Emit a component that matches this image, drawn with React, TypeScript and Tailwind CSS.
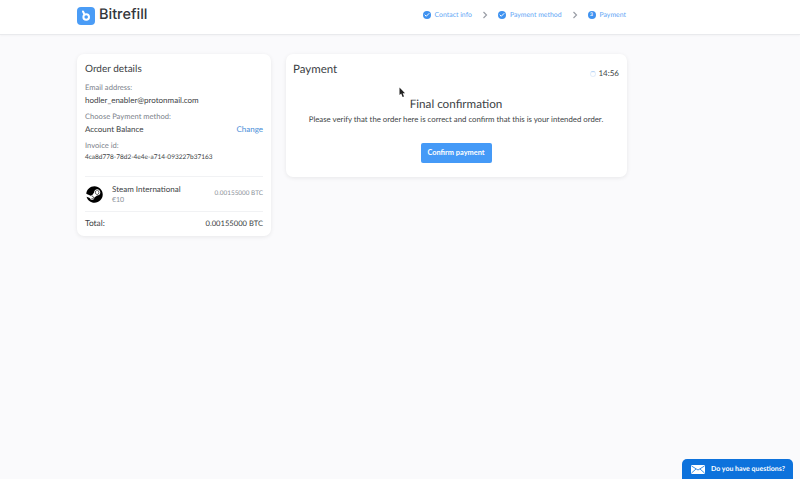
import { Check } from "lucide-react";
import { FaSteam } from "react-icons/fa";

const STEPS = [
  { label: "Contact info", done: true },
  { label: "Payment method", done: true },
  { label: "Payment", done: false },
];

export default function App() {
  return (
    <div className="relative h-[479px] w-[800px] overflow-hidden bg-[#fafafc] font-['Lato',sans-serif] text-[#3c3f45] [text-rendering:geometricPrecision]">
      <header className="flex h-[35px] items-center border-b border-[#e9eaed] bg-white pb-[3px] pl-[77px] pr-[174px] shadow-[0_1px_2px_rgba(0,0,0,0.03)]">
        <div className="flex items-center gap-[4px]">
          <div className="flex h-[18px] w-[18px] items-center justify-center rounded-[4px] bg-[#4a9cf6]">
            <svg width="12" height="12" viewBox="0 0 12 12" fill="none" stroke="#fff" strokeWidth="2" strokeLinecap="round">
              <path d="M3 1.5 4 3.5" />
              <circle cx="6.2" cy="7" r="2.8" />
            </svg>
          </div>
          <span className="font-['Inter',sans-serif] text-[14.5px] font-medium leading-none text-[#33363b]">Bitrefill</span>
        </div>
        <nav className="ml-auto flex items-center text-[6.9px] text-[#62a6f5]">
          {STEPS.map((step, i) => (
            <div key={step.label} className="flex items-center">
              <span className="flex h-[8px] w-[8px] items-center justify-center rounded-full bg-[#3f92f0] text-[5px] font-bold text-white">
                {step.done ? <Check size={6} strokeWidth={4} /> : "3"}
              </span>
              <span className="ml-[4px]">{step.label}</span>
              {i < STEPS.length - 1 && (
                <svg className="mx-[10px]" width="6" height="8" viewBox="0 0 6 8" fill="none" stroke="#9a9ea6" strokeWidth="1.2">
                  <path d="M1.5 1 4.5 4 1.5 7" />
                </svg>
              )}
            </div>
          ))}
        </nav>
      </header>

      <main className="flex items-start gap-[15px] pl-[77px] pt-[19px]">
        <section className="h-[182px] w-[194px] rounded-[7px] bg-white px-[8px] shadow-[0_1px_4px_rgba(0,0,0,0.08)]">
          <h2 className="pt-[8px] text-[10px] leading-[14px]">Order details</h2>
          <p className="mt-[6px] text-[7.6px] leading-[11px] text-[#7d828b]">Email address:</p>
          <p className="mt-[1px] text-[8px] leading-[12px]">hodler_enabler@protonmail.com</p>
          <p className="mt-[5px] text-[7.6px] leading-[11px] text-[#7d828b]">Choose Payment method:</p>
          <div className="mt-[1px] flex justify-between text-[8px] leading-[12px]">
            <span>Account Balance</span>
            <span className="text-[#4a8ed8]">Change</span>
          </div>
          <p className="mt-[5px] text-[7.6px] leading-[11px] text-[#7d828b]">Invoice id:</p>
          <p className="mt-[1px] text-[6.5px] leading-[11px]">4ca8d778-78d2-4e4e-a714-093227b37163</p>

          <div className="mt-[13px] flex h-[36px] items-center border-y border-[#f1f2f4]">
            <FaSteam className="ml-[1px] text-black" size={17} />
            <div className="ml-[9px]">
              <p className="text-[8px] leading-[11px]">Steam International</p>
              <p className="text-[7px] leading-[10px] text-[#8d929a]">€10</p>
            </div>
            <span className="ml-auto text-[6.4px] text-[#8d929a]">0.00155000 BTC</span>
          </div>
          <div className="mt-[5px] flex items-center justify-between text-[8.4px] leading-[12px]">
            <span>Total:</span>
            <span className="text-[7.6px]">0.00155000 BTC</span>
          </div>
        </section>

        <section className="h-[123px] w-[341px] rounded-[7px] bg-white pl-[7px] pr-[8px] shadow-[0_1px_4px_rgba(0,0,0,0.08)]">
          <div className="flex items-start justify-between">
            <h2 className="pt-[8px] text-[11.5px] leading-[16px]">Payment</h2>
            <div className="flex items-center pt-[14px] text-[8px] leading-[11px]">
              <span className="mr-[2px] h-[6px] w-[6px] rounded-full border border-[#e4eefb] border-t-[#b5d3f6]" />
              14:56
            </div>
          </div>
          <div className="flex flex-col items-center">
            <h3 className="mt-[17px] text-[11.7px] leading-[16px]">Final confirmation</h3>
            <p className="mt-[2px] text-[7.8px] leading-[11px]">Please verify that the order here is correct and confirm that this is your intended order.</p>
            <button className="mt-[18px] h-[20px] w-[71px] rounded-[2px] bg-[#459af7] text-[7.4px] font-bold text-white">Confirm payment</button>
          </div>
        </section>
      </main>

      {/* mouse pointer from the recording */}
      <svg className="absolute left-[399px] top-[87px]" width="7" height="11" viewBox="0 0 7 11">
        <path d="M0.5 0.5V8L2.2 6.6 3.6 10 5 9.4 3.7 6.2H6Z" fill="#222" />
      </svg>

      <div className="absolute bottom-0 right-[7px] flex h-[20px] w-[111px] items-center whitespace-nowrap rounded-t-[5px] bg-[#0d72dc] pl-[9px] text-[7px] font-bold text-white">
        <svg width="14" height="9" viewBox="0 0 14 9">
          <rect width="14" height="9" rx="1" fill="#fff" />
          <path d="M0.5 1 7 5 13.5 1M0.5 8 5 4M13.5 8 9 4" fill="none" stroke="#0d72dc" strokeWidth="0.8" />
        </svg>
        <span className="ml-[6px]">Do you have questions?</span>
      </div>
    </div>
  );
}
